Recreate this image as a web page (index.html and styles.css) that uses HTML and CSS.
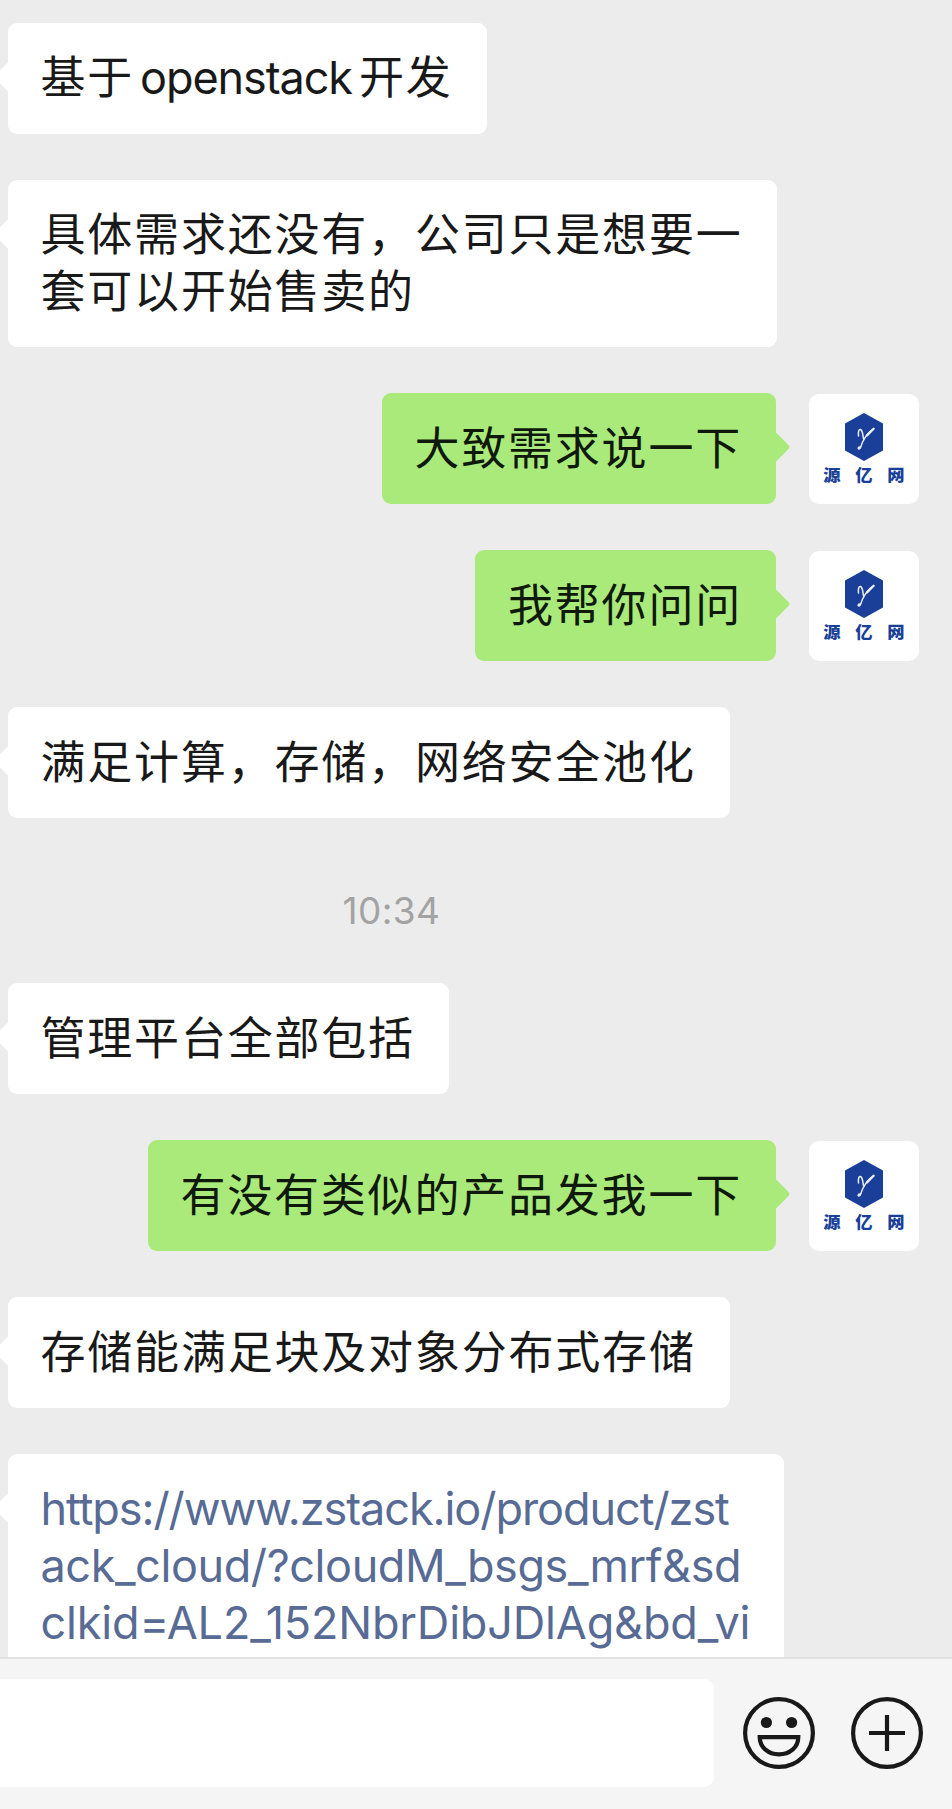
FILE: index.html
```html
<!DOCTYPE html>
<html lang="zh-CN">
<head>
  <meta charset="UTF-8">
  <meta name="viewport" content="width=device-width, initial-scale=1.0">
  <title>聊天</title>
  <link rel="stylesheet" href="styles.css">
</head>
<body>
  <svg class="symbols" aria-hidden="true">
    <symbol id="logo" viewBox="0 0 38 48">
      <path d="M19 0 L38 10.5 V37.5 L19 48 L0 37.5 V10.5 Z" fill="#193f98"/>
      <path d="M13.5 23 C13 18 14 16 15.5 16.5 C18.5 18 17.5 24 18.8 26.5 M28.6 15.8 C25 18 20 24 17.6 29 C15.5 33.5 15.8 36.5 13.8 36 C12.5 35.5 13.6 34 14.5 34" fill="none" stroke="#e8eefa" stroke-width="1.5" stroke-linecap="round"/>
      <path d="M28.6 15.8 L22 22.5" stroke="#e8eefa" stroke-width="2.3" stroke-linecap="round"/>
    </symbol>
  </svg>

  <div class="chat">
    <div class="row">
      <div class="bubble left">基于<span class="latin">openstack</span>开发</div>
    </div>
    <div class="row">
      <div class="bubble left">具体需求还没有，公司只是想要一<br>套可以开始售卖的</div>
    </div>
    <div class="row me">
      <div class="bubble right">大致需求说一下</div>
      <div class="avatar">
        <svg class="logo"><use href="#logo"/></svg>
        <div class="brand"><span>源</span><span>亿</span><span>网</span></div>
      </div>
    </div>
    <div class="row me">
      <div class="bubble right">我帮你问问</div>
      <div class="avatar">
        <svg class="logo"><use href="#logo"/></svg>
        <div class="brand"><span>源</span><span>亿</span><span>网</span></div>
      </div>
    </div>
    <div class="row">
      <div class="bubble left">满足计算，存储，网络安全池化</div>
    </div>
    <div class="time">10:34</div>
    <div class="row">
      <div class="bubble left">管理平台全部包括</div>
    </div>
    <div class="row me">
      <div class="bubble right">有没有类似的产品发我一下</div>
      <div class="avatar">
        <svg class="logo"><use href="#logo"/></svg>
        <div class="brand"><span>源</span><span>亿</span><span>网</span></div>
      </div>
    </div>
    <div class="row">
      <div class="bubble left">存储能满足块及对象分布式存储</div>
    </div>
    <div class="row">
      <div class="bubble left link"><a href="#"><span class="tight">https://www.zstack.io/product/zst</span><br><span class="snug">ack_cloud/?cloudM_bsgs_mrf&amp;sd</span><br><span class="loose">clkid=AL2_152NbrDibJDlAg&amp;bd_vi</span></a></div>
    </div>
  </div>

  <div class="toolbar">
    <div class="input"></div>
    <svg class="icon" viewBox="0 0 72 72">
      <circle cx="36" cy="36" r="33.9" fill="none" stroke="#191919" stroke-width="4.2"/>
      <circle cx="23.4" cy="25.5" r="5.6" fill="#191919"/>
      <circle cx="48.6" cy="25.5" r="5.6" fill="#191919"/>
      <path d="M16.7 40.2 H55.3 C55.3 50.5 46.5 57.3 36 57.3 C25.5 57.3 16.7 50.5 16.7 40.2 Z" fill="none" stroke="#191919" stroke-width="4.2"/>
    </svg>
    <svg class="icon" viewBox="0 0 72 72">
      <circle cx="36" cy="36" r="33.9" fill="none" stroke="#191919" stroke-width="4.2"/>
      <path d="M36 18 V54 M18 36 H54" fill="none" stroke="#191919" stroke-width="4.2"/>
    </svg>
  </div>
</body>
</html>
```

FILE: styles.css
```css
* {
  box-sizing: border-box;
}
body {
  margin: 0;
  height: 1809px;
  display: flex;
  flex-direction: column;
  overflow: hidden;
  background: #ececec;
  color: #191919;
  font-family: "Noto Sans CJK SC", sans-serif;
}
.symbols {
  display: none;
}
.chat {
  height: 1657px;
  padding: 23px 33px 0 8px;
  overflow: hidden;
}
.row {
  display: flex;
  margin-bottom: 46px;
}
.me {
  justify-content: flex-end;
  gap: 33px;
}
.bubble {
  position: relative;
  padding: 24.3px 34px 30.3px 32.5px;
  border-radius: 9px;
  font-size: 45px;
  font-weight: 400;
  line-height: 56.4px;
  letter-spacing: 1.8px;
  white-space: nowrap;
}
.left {
  background: #fff;
}
.right {
  background: #a9ea7a;
  color: #0f190b;
}
/* bubble tails */
.left::before,
.right::after {
  content: "";
  position: absolute;
  top: 43px;
  width: 22px;
  height: 22px;
  border-radius: 3px;
  transform: rotate(45deg);
}
.left::before {
  left: -10px;
  background: #fff;
}
.right::after {
  right: -10px;
  background: #a9ea7a;
}
.latin {
  margin: 0 7px 0 6px;
  font-family: Inter, sans-serif;
  font-size: 45px;
  line-height: 40px;
  letter-spacing: -1.1px;
}
.link {
  width: 776px;
  padding-top: 26px;
  font-family: Inter, sans-serif;
  line-height: 57px;
}
.link a {
  color: #576b95;
  text-decoration: none;
}
.tight {
  letter-spacing: -1.05px;
}
.snug {
  letter-spacing: -0.4px;
}
.loose {
  letter-spacing: -0.17px;
}
.avatar {
  width: 110px;
  height: 110px;
  display: flex;
  flex-direction: column;
  align-items: center;
  margin-top: 1px;
  padding-top: 19px;
  border-radius: 10px;
  background: #fff;
}
.logo {
  width: 38px;
  height: 48px;
}
.brand {
  width: 80px;
  display: flex;
  justify-content: space-between;
  margin-top: 4px;
  color: #193f98;
  font-size: 16px;
  font-weight: 900;
  line-height: 18px;
}
.brand span {
  transform: scaleX(1.08);
}
.time {
  width: 767px;
  height: 119px;
  padding-top: 24px;
  color: #a3a3a3;
  font-family: Inter, sans-serif;
  font-size: 37px;
  line-height: 46px;
  letter-spacing: 0.4px;
  text-align: center;
}
.toolbar {
  height: 152px;
  display: flex;
  align-items: center;
  padding: 0 29px 2px 0;
  border-top: 2px solid #e2e2e2;
  background: #f5f5f5;
}
.input {
  width: 714px;
  height: 108px;
  border-radius: 0 10px 10px 0;
  background: #fff;
}
.icon {
  width: 72px;
  height: 72px;
  margin-left: 29px;
}
.icon + .icon {
  margin-left: 36px;
}
```
